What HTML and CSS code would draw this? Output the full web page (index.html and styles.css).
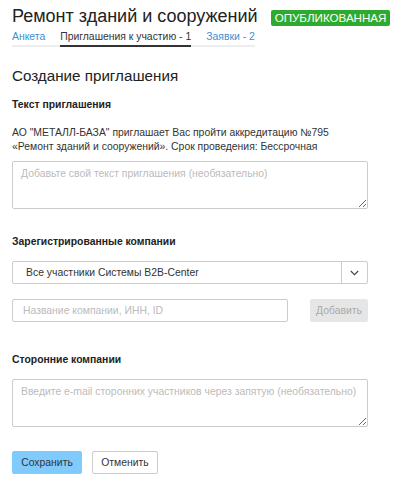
FILE: index.html
```html
<!DOCTYPE html>
<html lang="ru">
<head>
<meta charset="utf-8">
<link rel="stylesheet" href="styles.css">
</head>
<body>
<div class="page">
  <div class="title-row">
    <h1 class="title">Ремонт зданий и сооружений</h1>
    <span class="badge">ОПУБЛИКОВАННАЯ</span>
  </div>
  <nav class="tabs">
    <a class="tab">Анкета</a>
    <a class="tab active">Приглашения к участию - 1</a>
    <a class="tab">Заявки - 2</a>
  </nav>

  <h2 class="section-title">Создание приглашения</h2>

  <h3 class="label label-text">Текст приглашения</h3>
  <p class="text">АО "МЕТАЛЛ-БАЗА" приглашает Вас пройти аккредитацию №795<br>«Ремонт зданий и сооружений». Срок проведения: Бессрочная</p>
  <textarea class="area area-text" placeholder="Добавьте свой текст приглашения (необязательно)"></textarea>

  <h3 class="label label-reg">Зарегистрированные компании</h3>
  <div class="select">
    <span class="select-value">Все участники Системы B2B-Center</span>
    <span class="select-arrow">
      <svg width="9" height="6" viewBox="0 0 9 6"><path d="M0.8 1l3.7 3.7L8.2 1" fill="none" stroke="#444" stroke-width="1.1"/></svg>
    </span>
  </div>
  <div class="add-row">
    <input class="input" placeholder="Название компании, ИНН, ID">
    <button class="btn btn-disabled">Добавить</button>
  </div>

  <h3 class="label label-ext">Сторонние компании</h3>
  <textarea class="area area-ext" placeholder="Введите e-mail сторонних участников через запятую (необязательно)"></textarea>

  <div class="actions">
    <button class="btn btn-primary">Сохранить</button>
    <button class="btn btn-default">Отменить</button>
  </div>
</div>
</body>
</html>
```

FILE: styles.css
```css
* { box-sizing: border-box; }
html, body { margin: 0; padding: 0; background: #fff; }
body {
  font-family: "Liberation Sans", Arial, sans-serif;
  font-size: 10.4px;
  color: #333;
}
.page {
  width: 356px;
  margin-left: 12px;
}
.title-row {
  display: flex;
  align-items: flex-start;
  padding-top: 5px;
}
.title {
  margin: 0;
  font-size: 18px;
  line-height: 22px;
  font-weight: normal;
  color: #222;
  white-space: nowrap;
}
.badge {
  margin: 5px 0 0 13px;
  background: #2eab2e;
  color: #fff;
  font-size: 11.6px;
  line-height: 16px;
  height: 16px;
  padding: 0 4px;
  border-radius: 2px;
  white-space: nowrap;
}
.tabs {
  display: inline-flex;
  margin-top: 3px;
  border-bottom: 2px solid #eee;
}
.tab {
  line-height: 13px;
  padding-bottom: 2px;
  margin-right: 15px;
  margin-bottom: -2px;
  color: #3a8fd6;
  border-bottom: 2px solid transparent;
  white-space: nowrap;
}
.tab:last-child { margin-right: 0; }
.tab.active {
  color: #333;
  border-bottom-color: #333;
}
.section-title {
  margin: 20px 0 0;
  font-size: 15.2px;
  line-height: 18px;
  font-weight: normal;
  color: #222;
}
.label {
  margin: 0;
  font-size: 10.4px;
  line-height: 13px;
  font-weight: bold;
  color: #222;
}
.label-text { margin-top: 13px; }
.text {
  margin: 15px 0 0;
  line-height: 14px;
  color: #333;
  white-space: nowrap;
}
.area {
  display: block;
  width: 356px;
  height: 48px;
  padding: 5px 8px;
  border: 1px solid #ccc;
  border-radius: 2px;
  font-family: inherit;
  font-size: 10.4px;
  line-height: 14px;
  color: #333;
  resize: vertical;
}
.area-text { margin-top: 7px; }
.area-ext { margin-top: 13px; }
.area::placeholder, .input::placeholder { color: #bbb; }
.label-reg { margin-top: 26px; }
.select {
  display: flex;
  height: 23px;
  margin-top: 13px;
  border: 1px solid #ccc;
  border-radius: 2px;
}
.select-value {
  flex: 1;
  padding-left: 13px;
  line-height: 21px;
  color: #333;
}
.select-arrow {
  width: 26px;
  border-left: 1px solid #ccc;
  display: flex;
  align-items: center;
  justify-content: center;
}
.add-row {
  display: flex;
  justify-content: space-between;
  margin-top: 15px;
}
.input {
  width: 276px;
  height: 23px;
  padding: 0 10px;
  border: 1px solid #ccc;
  border-radius: 2px;
  font-family: inherit;
  font-size: 10.4px;
  color: #333;
}
.btn {
  height: 23px;
  padding: 0;
  font-family: inherit;
  font-size: 10.4px;
  border-radius: 2px;
  border: 1px solid transparent;
}
.btn-disabled {
  width: 58px;
  background: #e6e6e6;
  border-color: #e6e6e6;
  color: #aaa;
}
.label-ext { margin-top: 31px; }
.actions {
  display: flex;
  gap: 10px;
  margin-top: 24px;
}
.btn-primary {
  width: 70px;
  background: #7fcbfd;
  border-color: #7fcbfd;
  color: #333;
}
.btn-default {
  width: 66px;
  background: #fff;
  border-color: #ccc;
  color: #333;
}
```
